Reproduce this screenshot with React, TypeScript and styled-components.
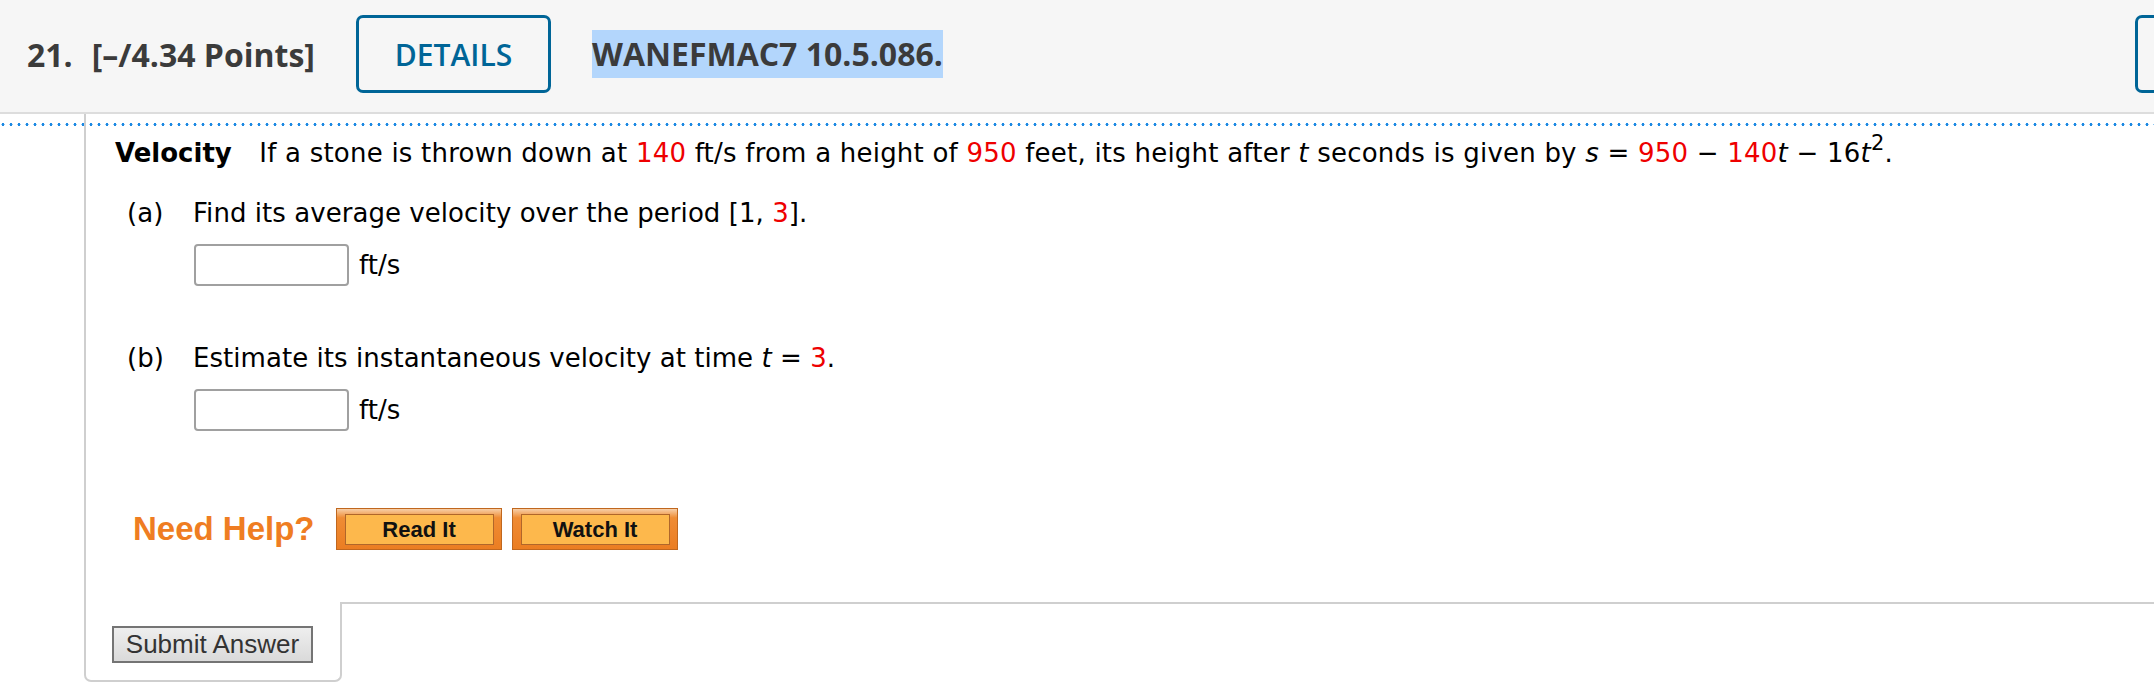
import { FC } from "react";
import styled, { createGlobalStyle } from "styled-components";

const GlobalStyle = createGlobalStyle`
  body {
    margin: 0;
    background: #fff;
  }
`;

const Page = styled.div`
  width: 2154px;
  height: 690px;
  overflow: hidden;
  font-family: Verdana, "DejaVu Sans", sans-serif;
  color: #000;
`;

const Header = styled.header`
  display: flex;
  align-items: center;
  box-sizing: border-box;
  height: 114px;
  padding: 0 0 4px 27px;
  background: #f6f6f6;
  border-bottom: 2px solid #dddddd;
  font-family: "Open Sans", sans-serif;
  color: #3b3b3b;
  overflow: hidden;
`;

const HeaderText = styled.span<{ $gap: number }>`
  font-size: 32px;
  font-weight: 700;
  margin-right: ${({ $gap }) => $gap}px;
  white-space: nowrap;
`;

const OutlineButton = styled.button<{ $width: number; $pull?: number }>`
  flex: none;
  box-sizing: border-box;
  width: ${({ $width }) => $width}px;
  height: 78px;
  padding: 0;
  border: 3px solid #006597;
  border-radius: 7px;
  background: transparent;
  color: #006597;
  font-family: "Open Sans", sans-serif;
  font-size: 30px;
  font-weight: 600;
  margin-right: ${({ $pull }) => ($pull ? -$pull : 41)}px;
`;

const QuestionCode = styled.span`
  font-size: 32px;
  font-weight: 700;
  line-height: 48px;
  background: #b3d6fc;
  white-space: nowrap;
`;

const Spacer = styled.div`
  flex: 1;
`;

const Content = styled.div`
  padding-left: 84px;
  background-image: radial-gradient(circle at 4px 1.5px, #1c89e3 1.3px, transparent 1.7px);
  background-size: 8px 3px;
  background-repeat: repeat-x;
  background-position: -1px 9px;
`;

const Card = styled.section`
  border-left: 2px solid #cfcfcf;
  padding: 20px 0 52px 29px;
  font-size: 26px;
  line-height: 38px;
`;

const Lead = styled.div`
  white-space: nowrap;
  letter-spacing: 0.22px;
`;

const Title = styled.b`
  margin-right: 19px;
  letter-spacing: 0;
`;

const Red = styled.span`
  color: #ee0000;
`;

const Var = styled.i``;

const Sup = styled.sup`
  font-size: 21px;
  line-height: 0;
  vertical-align: 12px;
`;

const Part = styled.div<{ $top: number }>`
  margin-top: ${({ $top }) => $top}px;
  padding-left: 12px;
`;

const PartLine = styled.div`
  display: flex;
  white-space: nowrap;
  letter-spacing: 0.05px;
`;

const PartLabel = styled.span`
  flex: none;
  width: 66px;
`;

const AnswerRow = styled.div`
  display: flex;
  align-items: center;
  gap: 10px;
  margin: 12px 0 0 67px;
`;

const AnswerInput = styled.input`
  box-sizing: border-box;
  width: 155px;
  height: 42px;
  border: 2px solid #a0a0a0;
  border-radius: 4px;
  background: #fff;
`;

const HelpRow = styled.div`
  display: flex;
  align-items: center;
  gap: 10px;
  margin-top: 77px;
  padding-left: 18px;
`;

const HelpLabel = styled.span`
  font-family: "Liberation Sans", Arial, sans-serif;
  font-size: 33px;
  font-weight: 700;
  line-height: 42px;
  color: #ef7d22;
  margin-right: 11px;
`;

const HelpButton = styled.button`
  box-sizing: border-box;
  width: 166px;
  height: 42px;
  padding: 5px 7px 6px 8px;
  border: 1px solid #c0671e;
  background: linear-gradient(#f7cfa8 0, #ef8c34 22%, #eb7d22 100%);
  cursor: pointer;
`;

const HelpFace = styled.span`
  display: flex;
  align-items: center;
  justify-content: center;
  height: 100%;
  border: 1px solid #b0662a;
  background: #fdb84c;
  font-family: "Liberation Sans", Arial, sans-serif;
  font-size: 22px;
  font-weight: 700;
  color: #111;
`;

const Footer = styled.div`
  display: flex;
  align-items: flex-start;
`;

const SubmitTab = styled.div`
  box-sizing: border-box;
  width: 258px;
  padding: 24px 0 17px 26px;
  border: 2px solid #cfcfcf;
  border-top: none;
  border-radius: 0 0 7px 7px;
`;

const SubmitButton = styled.button`
  display: block;
  box-sizing: border-box;
  width: 201px;
  height: 37px;
  padding: 0;
  border: 2px solid #747474;
  background: linear-gradient(#eeeeee, #dadada);
  font-family: "Liberation Sans", Arial, sans-serif;
  font-size: 26px;
  color: #333;
`;

const Filler = styled.div`
  flex: 1;
  height: 80px;
  border-top: 2px solid #cfcfcf;
`;

const App: FC = () => {
  return (
    <Page>
      <GlobalStyle />
      <Header>
        <HeaderText $gap={19}>21.</HeaderText>
        <HeaderText $gap={41}>[–/4.34 Points]</HeaderText>
        <OutlineButton $width={195}>DETAILS</OutlineButton>
        <QuestionCode>WANEFMAC7 10.5.086.</QuestionCode>
        <Spacer />
        <OutlineButton $width={199} $pull={180} aria-label="My Notes" />
      </Header>
      <Content>
        <Card>
          <Lead>
            <Title>Velocity</Title> If a stone is thrown down at <Red>140</Red>{" "}
            ft/s from a height of <Red>950</Red> feet, its height after{" "}
            <Var>t</Var> seconds is given by <Var>s</Var> = <Red>950</Red> −{" "}
            <Red>140</Red>
            <Var>t</Var> − 16<Var>t</Var>
            <Sup>2</Sup>.
          </Lead>
          <Part $top={22}>
            <PartLine>
              <PartLabel>(a)</PartLabel>
              <span>
                Find its average velocity over the period [1, <Red>3</Red>].
              </span>
            </PartLine>
            <AnswerRow>
              <AnswerInput type="text" />
              <span>ft/s</span>
            </AnswerRow>
          </Part>
          <Part $top={53}>
            <PartLine>
              <PartLabel>(b)</PartLabel>
              <span>
                Estimate its instantaneous velocity at time <Var>t</Var> ={" "}
                <Red>3</Red>.
              </span>
            </PartLine>
            <AnswerRow>
              <AnswerInput type="text" />
              <span>ft/s</span>
            </AnswerRow>
          </Part>
          <HelpRow>
            <HelpLabel>Need Help?</HelpLabel>
            <HelpButton>
              <HelpFace>Read It</HelpFace>
            </HelpButton>
            <HelpButton>
              <HelpFace>Watch It</HelpFace>
            </HelpButton>
          </HelpRow>
        </Card>
        <Footer>
          <SubmitTab>
            <SubmitButton>Submit Answer</SubmitButton>
          </SubmitTab>
          <Filler />
        </Footer>
      </Content>
    </Page>
  );
};

export default App;
